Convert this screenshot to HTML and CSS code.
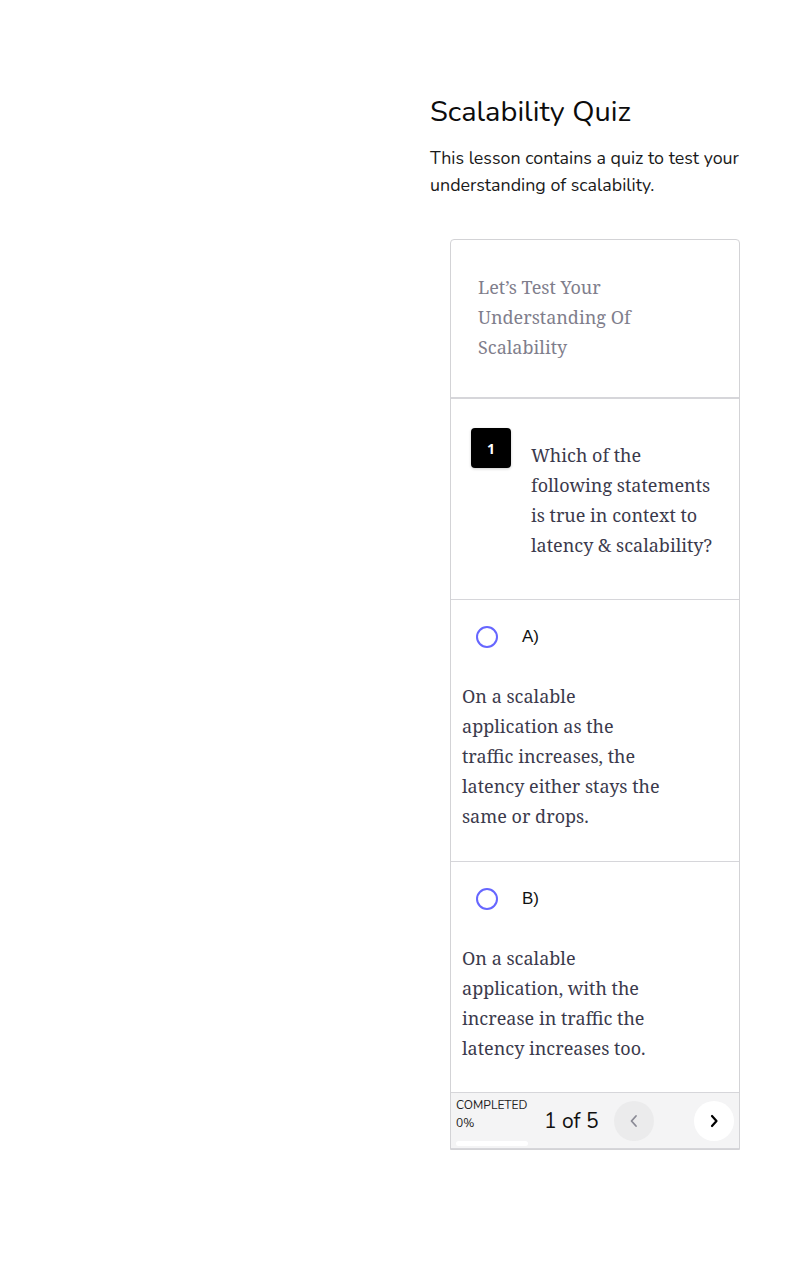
FILE: index.html
```html
<!DOCTYPE html>
<html>
<head>
<meta charset="utf-8">
<link rel="stylesheet" href="styles.css">
</head>
<body>
<main class="page">
  <h1 class="title">Scalability Quiz</h1>
  <p class="lead">This lesson contains a quiz to test your understanding of scalability.</p>
  <section class="card">
    <div class="card-head">Let’s Test Your Understanding Of Scalability</div>
    <div class="question">
      <div class="badge">1</div>
      <div class="q-text">Which of the following statements is true in context to latency &amp; scalability?</div>
    </div>
    <div class="option">
      <div class="opt-row"><span class="radio"></span><span class="opt-label">A)</span></div>
      <div class="opt-text">On a scalable application as the traffic increases, the latency either stays the same or drops.</div>
    </div>
    <div class="option last">
      <div class="opt-row"><span class="radio"></span><span class="opt-label">B)</span></div>
      <div class="opt-text">On a scalable application, with the increase in traffic the latency increases too.</div>
    </div>
    <div class="footer">
      <div class="progress">
        <div class="prog-label">COMPLETED</div>
        <div class="prog-pct">0%</div>
        <div class="prog-bar"></div>
      </div>
      <div class="count">1 of 5</div>
      <button class="nav prev"><svg width="16" height="16" viewBox="0 0 16 16"><path d="M10 3 L5.5 8 L10 13" fill="none" stroke="#8a8a95" stroke-width="1.8" stroke-linecap="round" stroke-linejoin="round"/></svg></button>
      <button class="nav next"><svg width="16" height="16" viewBox="0 0 16 16"><path d="M6 3 L10.5 8 L6 13" fill="none" stroke="#000" stroke-width="2.2" stroke-linecap="round" stroke-linejoin="round"/></svg></button>
    </div>
  </section>
</main>
</body>
</html>
```

FILE: styles.css
```css
html, body { margin: 0; padding: 0; background: #fff; }
body { font-family: "Nunito", "Lato", "Open Sans", sans-serif; color: #111; }
.page { width: 310px; margin-left: 430px; padding-top: 93px; }
.title { font-size: 29px; font-weight: 400; line-height: 38px; margin: 0 0 14px 0; color: #0c0c0c; }
.lead { font-size: 17.85px; line-height: 27px; margin: 0 0 40px 0; color: #1a1a1a; }
.card { margin-left: 20px; width: 288px; border: 1px solid #d3d3d6; border-radius: 4px 4px 0 0; }
.card-head { font-family: "Noto Serif", "DejaVu Serif", serif; font-size: 18px; line-height: 30px; color: #7f7e8c; padding: 32px 40px 35px 27px; border-bottom: 2px solid #d6d6da; }
.question { display: flex; align-items: flex-start; gap: 20px; padding: 29px 20px 39px 20px; border-bottom: 1px solid #d6d6da; }
.badge { flex: 0 0 40px; height: 40px; border-radius: 4px; background: #000; color: #fff; font-family: "Open Sans", sans-serif; font-weight: 700; font-size: 14px; display: flex; align-items: center; justify-content: center; box-shadow: 0 1px 3px rgba(0,0,0,0.2); }
.q-text { margin-top: 12px; font-family: "Noto Serif", "DejaVu Serif", serif; font-size: 18px; line-height: 30px; color: #3b3a4c; }
.option { padding: 26px 20px 30px 11px; border-bottom: 1px solid #d6d6da; }
.option.last { border-bottom: none; padding-bottom: 29px; }
.opt-row { display: flex; align-items: center; height: 22px; padding-left: 14px; gap: 24px; }
.radio { width: 18px; height: 18px; border: 2px solid #6666ff; border-radius: 50%; }
.opt-label { font-family: "Liberation Sans", Arial, sans-serif; font-size: 17px; color: #111; }
.opt-text { margin-top: 33px; width: 202px; font-family: "Noto Serif", "DejaVu Serif", serif; font-size: 18px; line-height: 30px; color: #3b3a4c; }
.footer { display: flex; align-items: center; height: 55px; background: #f4f4f5; border-top: 1px solid #d6d6da; border-bottom: 1px solid #d6d6da; padding: 0 5px 0 5px; }
.progress { width: 80px; align-self: stretch; padding-top: 6px; box-sizing: border-box; }
.prog-label { font-size: 12px; line-height: 13px; color: #222; }
.prog-pct { font-size: 12px; line-height: 13px; margin-top: 5px; color: #222; }
.prog-bar { width: 72px; height: 5px; border-radius: 3px; background: #fff; margin-top: 11px; }
.count { font-size: 21px; color: #111; margin-left: 8px; width: 70px; }
.nav { width: 40px; height: 40px; border-radius: 50%; border: none; display: flex; align-items: center; justify-content: center; padding: 0; }
.prev { background: #ebebec; margin-left: 0; }
.next { background: #fff; margin-left: 40px; }
```
